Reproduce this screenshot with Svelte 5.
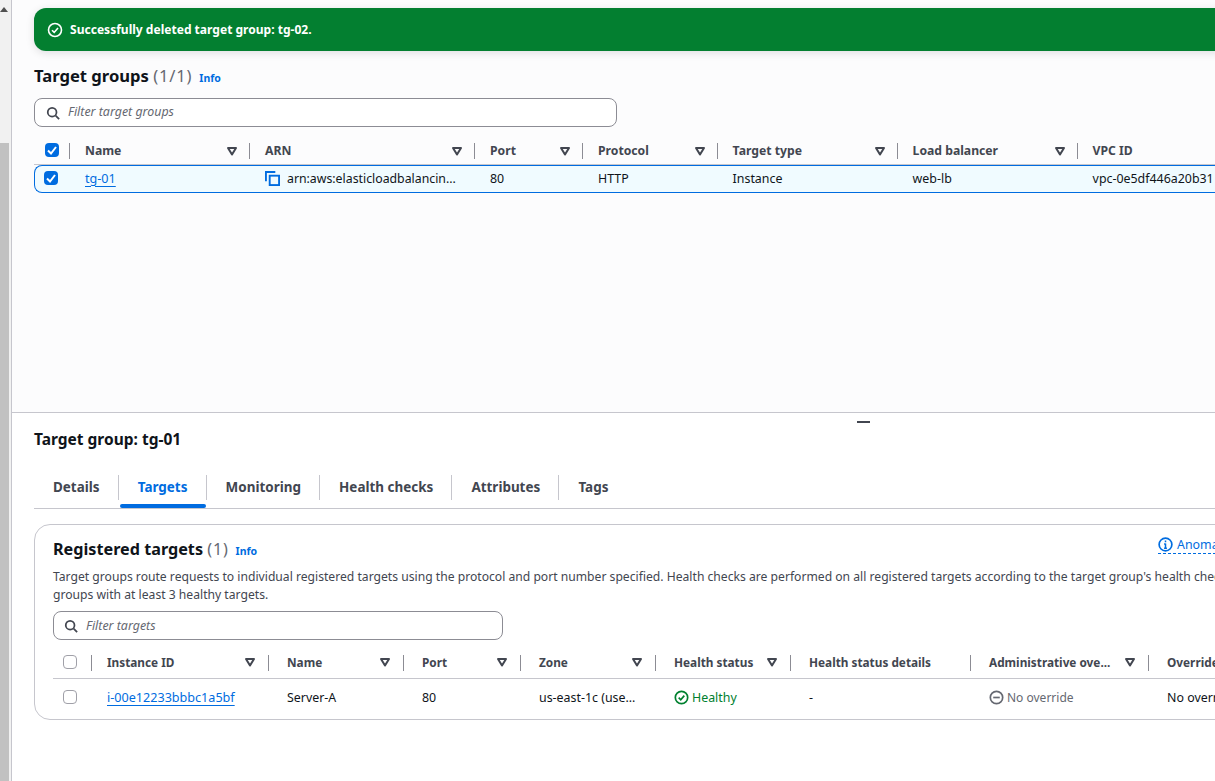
<script>
  const groupCols = [
    { label: 'Name', w: 180, sort: true },
    { label: 'ARN', w: 225, sort: true },
    { label: 'Port', w: 108, sort: true },
    { label: 'Protocol', w: 134.6, sort: true },
    { label: 'Target type', w: 180, sort: true },
    { label: 'Load balancer', w: 180, sort: true },
    { label: 'VPC ID', w: 200, sort: false }
  ];
  const targetCols = [
    { label: 'Instance ID', w: 177, sort: true, first: true },
    { label: 'Name', w: 135, sort: true },
    { label: 'Port', w: 117, sort: true },
    { label: 'Zone', w: 135, sort: true },
    { label: 'Health status', w: 135, sort: true },
    { label: 'Health status details', w: 180, sort: false },
    { label: 'Administrative ove...', w: 178, sort: true },
    { label: 'Override details', w: 180, sort: false }
  ];
  const tabs = ['Details', 'Targets', 'Monitoring', 'Health checks', 'Attributes', 'Tags'];
</script>

{#snippet caret()}
  <svg class="caret" viewBox="0 0 12 12" width="12" height="12"><path d="M2 3h8L6 9.5z" fill="none" stroke="#424650" stroke-width="2" stroke-linejoin="round"/></svg>
{/snippet}
{#snippet search()}
  <svg class="search" viewBox="0 0 16 16" width="16" height="16"><circle cx="7" cy="7" r="5" fill="none" stroke="#424650" stroke-width="2"/><path d="M11 11l4 4" stroke="#424650" stroke-width="2" fill="none"/></svg>
{/snippet}
{#snippet check()}
  <span class="cb on"><svg viewBox="0 0 14 14" width="14" height="14"><path d="M3 7.5l3 3 5-6.5" fill="none" stroke="#fff" stroke-width="2"/></svg></span>
{/snippet}
{#snippet head(cols)}
  {#each cols as c}
    <div class="th" class:first={c.first} style="width:{c.w}px">
      <span class="sep"></span>
      <span class="label">{c.label}</span>
      {#if c.sort}{@render caret()}{/if}
    </div>
  {/each}
{/snippet}

<div class="page">
  <aside class="scrollbar">
    <svg viewBox="0 0 8 5" width="8" height="5" class="arrow"><path d="M0 5l4-5 4 5z" fill="#505050"/></svg>
    <div class="thumb"></div>
  </aside>
  <main>
    <section class="top">
      <div class="flash">
        <svg viewBox="0 0 16 16" width="16" height="16"><circle cx="8" cy="8" r="6.5" fill="none" stroke="#fff" stroke-width="1.6"/><path d="M5 8.2l2.2 2.2L11 6" fill="none" stroke="#fff" stroke-width="1.6"/></svg>
        <span>Successfully deleted target group: tg-02.</span>
      </div>
      <div class="title-row">
        <h1>Target groups <span class="count">(1/1)</span></h1>
        <a class="info">Info</a>
      </div>
      <div class="filter wide">{@render search()}<span>Filter target groups</span></div>
      <div class="thead first">
        <div class="sel">{@render check()}</div>
        {@render head(groupCols)}
      </div>
      <div class="tr selected">
        <div class="sel">{@render check()}</div>
        <div class="td" style="width:180px"><a class="link">tg-01</a></div>
        <div class="td arn" style="width:225px">
          <svg viewBox="0 0 16 16" width="16" height="16"><path d="M1 11V1h10" fill="none" stroke="#006ce0" stroke-width="2"/><rect x="5" y="5" width="10" height="10" fill="none" stroke="#006ce0" stroke-width="2"/></svg>
          <span>arn:aws:elasticloadbalancin...</span>
        </div>
        <div class="td" style="width:108px">80</div>
        <div class="td" style="width:134.6px">HTTP</div>
        <div class="td" style="width:180px">Instance</div>
        <div class="td" style="width:180px">web-lb</div>
        <div class="td" style="width:200px">vpc-0e5df446a20b31</div>
      </div>
    </section>
    <section class="bottom">
      <span class="handle"></span>
      <h2>Target group: tg-01</h2>
      <nav class="tabs">
        {#each tabs as t, i}
          <div class="tab" class:active={t === 'Targets'} class:nosep={i === tabs.length - 1}>{t}</div>
        {/each}
      </nav>
      <div class="card">
        <div class="card-head">
          <h3>Registered targets <span class="count">(1)</span></h3>
          <a class="info">Info</a>
          <a class="anomaly">
            <svg viewBox="0 0 16 16" width="16" height="16"><circle cx="8" cy="8" r="6.8" fill="none" stroke="#006ce0" stroke-width="1.8"/><path d="M8 7v5M6.5 7.5H8M6.5 12h3M8 3.8v1.8" fill="none" stroke="#006ce0" stroke-width="1.6"/></svg>
            <span>Anomaly mitigation</span>
          </a>
        </div>
        <p>Target groups route requests to individual registered targets using the protocol and port number specified. Health checks are performed on all registered targets according to the target group's health check settings. Anomaly mitigation is available for target<br>groups with at least 3 healthy targets.</p>
        <div class="filter narrow">{@render search()}<span>Filter targets</span></div>
        <div class="thead second">
          <div class="sel2"><span class="cb"></span></div>
          {@render head(targetCols)}
        </div>
        <div class="tr plain">
          <div class="sel2"><span class="cb"></span></div>
          <div class="td first" style="width:177px"><a class="link">i-00e12233bbbc1a5bf</a></div>
          <div class="td" style="width:135px">Server-A</div>
          <div class="td" style="width:117px">80</div>
          <div class="td" style="width:135px">us-east-1c (use...</div>
          <div class="td status ok" style="width:135px">
            <svg viewBox="0 0 16 16" width="15" height="15"><circle cx="8" cy="8" r="6.6" fill="none" stroke="#00802f" stroke-width="1.8"/><path d="M5 8.2l2.2 2.2L11 6" fill="none" stroke="#00802f" stroke-width="1.8"/></svg>
            <span>Healthy</span>
          </div>
          <div class="td" style="width:180px">-</div>
          <div class="td status off" style="width:178px">
            <svg viewBox="0 0 16 16" width="15" height="15"><circle cx="8" cy="8" r="6.6" fill="none" stroke="#656871" stroke-width="1.8"/><path d="M4.5 8h7" stroke="#656871" stroke-width="1.8"/></svg>
            <span>No override</span>
          </div>
          <div class="td" style="width:180px">No override</div>
        </div>
      </div>
    </section>
  </main>
</div>

<style>
  :global(body) { margin: 0; background: #fff; overflow: hidden; }
  .page {
    display: flex; width: 1215px; height: 781px; overflow: hidden;
    font-family: "Noto Sans", sans-serif; font-size: 12.4px; color: #0f141a;
  }
  .scrollbar {
    flex: 0 0 11px; display: flex; flex-direction: column; align-items: flex-start;
    background: #f1f1f1; border-right: 1px solid #c6c6cd;
  }
  .arrow { margin: 7px 0 0 0; }
  .thumb { width: 9px; flex: 1; margin-top: 131px; background: #c1c1c1; }
  main { flex: 1; min-width: 0; display: flex; flex-direction: column; }
  .top {
    height: 413px; flex: none; box-sizing: border-box; padding: 8px 0 0 22px;
    background: #fcfcfd; border-bottom: 1px solid #c6c6cd;
  }
  .flash {
    width: 1300px; height: 43px; box-sizing: border-box; padding-left: 13px;
    display: flex; align-items: center; gap: 7px;
    background: #037f30; color: #fff; border-radius: 12px; font-weight: 700; font-size: 12.05px;
    box-shadow: 0 2px 8px rgba(0, 7, 22, .12);
  }
  .title-row { display: flex; align-items: baseline; gap: 7px; margin-top: 12px; height: 25px; }
  h1 { margin: 0; font-size: 16.6px; font-weight: 700; line-height: 25px; }
  .count { font-weight: 400; color: #656871; letter-spacing: .8px; }
  .info { color: #006ce0; font-size: 10.5px; font-weight: 700; }
  .filter {
    display: flex; align-items: center; gap: 8px; height: 29px; box-sizing: border-box;
    padding-left: 11px; background: #fff; border: 1px solid #8c8c94; border-radius: 8px;
    color: #656871; font-style: italic;
  }
  .filter.wide span { position: relative; top: -1px; }
  .filter.wide { width: 583px; margin-top: 10px; }
  .filter.narrow { width: 450px; margin-top: 7px; padding-left: 10px; }
  .search { flex: none; width: 14px; height: 14px; }
  .thead { display: flex; align-items: center; width: 1300px; box-sizing: border-box; }
  .thead.first { height: 38px; padding-top: 10px; border-bottom: 1px solid #c6c6cd; font-size: 12.2px; }
  .thead.first .sel { margin-top: -2px; }
  .thead.second { height: 39px; padding-top: 5px; border-bottom: 1px solid #c6c6cd; font-size: 11.8px; }
  .sel { flex: 0 0 35px; box-sizing: border-box; padding-left: 11px; display: flex; }
  .sel2 { flex: 0 0 38px; box-sizing: border-box; padding-left: 10px; display: flex; }
  .th {
    flex: none; box-sizing: border-box; position: relative; display: flex; align-items: center;
    padding: 0 11px 0 16px; font-weight: 700; color: #424650; white-space: nowrap;
  }
  .second .th { padding: 0 12px 0 19px; }
  .second .th.first { padding-left: 16px; }
  .th .label { flex: 1; }
  .sep { position: absolute; left: 0; top: 1px; height: 16px; width: 1px; background: #8c8c94; }
  .caret { flex: none; }
  .cb {
    display: block; width: 14px; height: 14px; box-sizing: border-box;
    border: 1.5px solid #a0a0a8; border-radius: 4px; background: #fff;
  }
  .cb.on { border: none; background: #006ce0; }
  .cb svg { display: block; }
  .tr { display: flex; align-items: center; box-sizing: border-box; width: 1300px; }
  .tr.selected {
    height: 28px; padding-bottom: 2px; background: #f0fbff; border: 1px solid #006ce0; border-right: none;
    border-radius: 8px 0 0 8px;
  }
  .tr.selected .sel { flex-basis: 34px; padding-left: 9px; }
  .tr.plain { height: 40px; padding-bottom: 4px; }
  .td { flex: none; box-sizing: border-box; padding-left: 16px; white-space: nowrap; }
  .plain .td { padding-left: 19px; }
  .plain .td.first { padding-left: 16px; }
  .link { color: #006ce0; font-size: 12.6px; text-decoration: underline; text-underline-offset: 3px; }
  .arn { display: flex; align-items: center; gap: 7px; font-size: 12.3px; }
  .arn svg { flex: none; width: 15px; height: 15px; }
  .status { display: flex; align-items: center; gap: 3px; }
  .off { font-size: 12px; }
  .ok { color: #00802f; }
  .off { color: #656871; }
  .bottom { flex: 1; min-height: 0; position: relative; padding: 0 0 0 22px; background: #fff; }
  .handle { position: absolute; left: 845px; top: 8px; width: 13px; height: 2px; background: #424650; }
  h2 { margin: 0; padding-top: 15px; font-size: 15.5px; line-height: 22px; font-weight: 700; }
  .tabs {
    display: flex; align-items: flex-start; margin-top: 16px; height: 42px; width: 1300px;
    border-bottom: 1px solid #c6c6cd;
  }
  .tab {
    position: relative; display: flex; align-items: center; box-sizing: border-box; padding: 0 18.2px 2px 19px;
    font-weight: 700; font-size: 13.45px; color: #424650; height: 25px; margin-top: 9px;
    border-right: 1px solid #c6c6cd;
  }
  .tab.nosep { border-right: none; }
  .tab.active { color: #006ce0; }
  .tab.active::after {
    content: ""; position: absolute; left: 1px; right: 0; bottom: -8px; height: 4px;
    background: #006ce0; border-radius: 2px;
  }
  .card {
    margin-top: 15px; width: 1300px; height: 196px; box-sizing: border-box;
    border: 1px solid #c6c6cd; border-radius: 16px; padding: 12px 0 0 18px; background: #fff;
  }
  .card-head { display: flex; align-items: baseline; gap: 7px; position: relative; height: 25px; }
  h3 { margin: 0; font-size: 16.2px; font-weight: 700; line-height: 25px; }
  .anomaly {
    position: absolute; left: 1105px; top: -2px; display: flex; align-items: center; gap: 4px;
    color: #006ce0; white-space: nowrap; height: 18px; border-bottom: 1px dashed #006ce0;
  }
  .anomaly svg { width: 15px; height: 15px; }
  p { margin: 6px 0 0; color: #424650; font-size: 12.15px; line-height: 18px; white-space: nowrap; }
</style>
